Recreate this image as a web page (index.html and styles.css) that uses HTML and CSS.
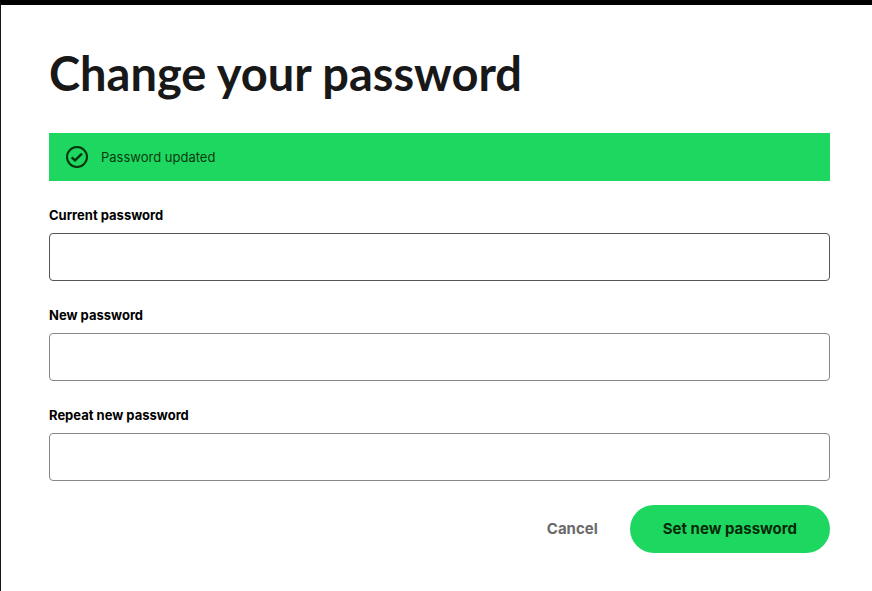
FILE: index.html
```html
<!DOCTYPE html>
<html lang="en">
<head>
    <meta charset="UTF-8">
    <meta name="viewport" content="width=device-width, initial-scale=1.0">
    <title>Change your password</title>
    <link rel="stylesheet" href="styles.css">
</head>
<body>
    <main class="page">
        <h1>Change your password</h1>

        <div class="banner" role="status">
            <svg class="banner-icon" viewBox="0 0 24 24" width="24" height="24" fill="none" stroke="currentColor" stroke-width="2" aria-hidden="true">
                <circle cx="12" cy="12" r="10"/>
                <path stroke-width="2.4" d="M6.6 12.3l3.4 3.1 7-6.7"/>
            </svg>
            <span>Password updated</span>
        </div>

        <form class="password-form">
            <div class="field">
                <label for="current-password">Current password</label>
                <input class="current" type="password" id="current-password" name="current-password" autocomplete="current-password">
            </div>
            <div class="field">
                <label for="new-password">New password</label>
                <input type="password" id="new-password" name="new-password" autocomplete="new-password">
            </div>
            <div class="field">
                <label for="repeat-password">Repeat new password</label>
                <input type="password" id="repeat-password" name="repeat-password" autocomplete="new-password">
            </div>

            <div class="actions">
                <a class="cancel" href="#">Cancel</a>
                <button type="submit">Set new password</button>
            </div>
        </form>
    </main>
</body>
</html>
```

FILE: styles.css
```css
* {
    box-sizing: border-box;
}

body {
    margin: 0;
    min-height: 100vh;
    border-top: 5px solid #000;
    border-left: 1px solid #191414;
    background: #fff;
    color: #121212;
    font-family: Inter, "Liberation Sans", sans-serif;
    font-size: 13px;
    line-height: 20px;
}

.page {
    padding: 40px 42px 38px 48px;
}

h1 {
    margin: 0 0 32px;
    color: #181818;
    font-family: Lato, "Liberation Sans", sans-serif;
    font-size: 47px;
    font-weight: 700;
    line-height: 56px;
}

.banner {
    display: flex;
    align-items: center;
    gap: 12px;
    min-height: 48px;
    margin-bottom: 24px;
    padding: 12px 16px;
    background: #1ed760;
    color: #0b3a0c;
}

.banner-icon {
    flex: none;
    color: #06330b;
}

.password-form {
    display: flex;
    flex-direction: column;
    gap: 24px;
}

.field {
    display: flex;
    flex-direction: column;
    gap: 8px;
}

label {
    color: #000;
    font-weight: 700;
}

input {
    width: 100%;
    height: 48px;
    padding: 12px 14px;
    border: 1px solid #878787;
    border-radius: 4px;
    background: #fff;
    font: inherit;
}

input.current,
input:hover {
    border-color: #555;
}

.actions {
    display: flex;
    align-items: center;
    justify-content: flex-end;
    gap: 32px;
    font-size: 15px;
    font-weight: 700;
}

.cancel {
    color: #6a6a6a;
    text-decoration: none;
}

button {
    height: 48px;
    padding: 0 33px;
    border: none;
    border-radius: 24px;
    background: #1ed760;
    color: #062a08;
    font: inherit;
    cursor: pointer;
}
```
